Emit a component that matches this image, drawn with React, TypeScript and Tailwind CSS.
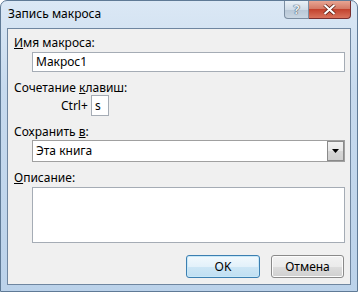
import React from "react";

const font = "font-['Noto_Sans','Liberation_Sans',sans-serif]";

export default function App() {
  return (
    <div className={`w-[358px] h-[292px] bg-white ${font} text-[12px] text-black`}>
      <div className="w-[358px] h-[292px] rounded-t-[7px] border border-[#5f7a96] bg-[linear-gradient(180deg,#dbe8f5_0%,#c7daee_30%,#bbd2ea_100%)] flex flex-col">
        {/* Title bar */}
        <div className="h-[27px] flex items-start justify-between">
          <span className="pl-[7px] pt-[5px] leading-[16px] text-[12px]">Запись макроса</span>
          <div className="flex mr-[6px]">
            <div className="w-[25px] h-[18px] rounded-bl-[4px] border border-[#7c8ea2] border-t-0 bg-[linear-gradient(180deg,#e9f0f7_0%,#cfdbe7_50%,#b8c7d6_51%,#c9d6e3_100%)] flex items-center justify-center">
              <span className="text-[13px] font-bold leading-none text-[#e8eef5] [text-shadow:0_0_1px_#2b3a4a,0_0_1px_#2b3a4a]">?</span>
            </div>
            <div className="w-[42px] h-[18px] rounded-br-[4px] border border-[#7a2f2f] border-t-0 border-l-0 bg-[linear-gradient(180deg,#e8a593_0%,#d47a66_45%,#c3432e_50%,#d9735d_100%)] flex items-center justify-center">
              <svg width="13" height="11" viewBox="0 0 13 11">
                <path d="M1.5 1 L11.5 10 M11.5 1 L1.5 10" stroke="#5a1a10" strokeWidth="3.6" />
                <path d="M1.5 1 L11.5 10 M11.5 1 L1.5 10" stroke="#ffffff" strokeWidth="2.2" />
              </svg>
            </div>
          </div>
        </div>

        {/* Client area */}
        <div className="mx-[6px] h-[257px] border border-[#6f86a0] bg-[#f0f0f0] flex flex-col pl-[6px] pr-[5px] pt-[6px]">
          <div className="leading-[16px] h-[16px]">
            <u>И</u>мя макроса:
          </div>
          <div className="ml-[18px] mt-[1px] h-[20px] border border-[#a5acb5] bg-white flex items-center pl-[3px] leading-[16px]">
            Макрос1
          </div>

          <div className="mt-[8px] leading-[16px] h-[16px]">
            Сочетание <u>к</u>лавиш:
          </div>
          <div className="flex items-center mt-[-1px] ml-[47px] h-[21px]">
            <span className="leading-[16px] w-[30px]">Ctrl+</span>
            <div className="w-[18px] h-[21px] border border-[#a5acb5] bg-white flex items-center pl-[3px] leading-[16px]">
              s
            </div>
          </div>

          <div className="mt-[8px] leading-[16px] h-[16px]">
            Сохранить <u>в</u>:
          </div>
          <div className="ml-[18px] h-[22px] border border-[#a0a0a0] bg-white flex items-center justify-between">
            <span className="pl-[3px] leading-[16px]">Эта книга</span>
            <div className="w-[17px] h-[20px] border border-[#8a8a8a] bg-[linear-gradient(180deg,#f2f2f2_0%,#e6e6e6_50%,#d6d6d6_51%,#cfcfcf_100%)] flex items-center justify-center">
              <svg width="7" height="4" viewBox="0 0 7 4">
                <path d="M0 0 H7 L3.5 4 Z" fill="#000" />
              </svg>
            </div>
          </div>

          <div className="mt-[8px] leading-[16px] h-[16px]">
            <u>О</u>писание:
          </div>
          <div className="ml-[18px] mt-[1px] h-[56px] border border-[#a5acb5] bg-white" />

          <div className="mt-[12px] flex justify-end gap-[11px] pr-[1px]">
            <button className="w-[74px] h-[23px] rounded-[3px] border border-[#3c7fb1] bg-[linear-gradient(180deg,#f2f9fd_0%,#e3f1fa_50%,#cde6f5_51%,#c0dff2_100%)] shadow-[inset_0_0_0_1px_#c8e8f8] leading-[16px] text-[12px]">
              OK
            </button>
            <button className="w-[73px] h-[23px] rounded-[3px] border border-[#8a8a8a] bg-[linear-gradient(180deg,#f2f2f2_0%,#ebebeb_50%,#dddddd_51%,#cfcfcf_100%)] shadow-[inset_0_0_0_1px_#fcfcfc] leading-[16px] text-[12px]">
              Отмена
            </button>
          </div>
        </div>
      </div>
    </div>
  );
}
